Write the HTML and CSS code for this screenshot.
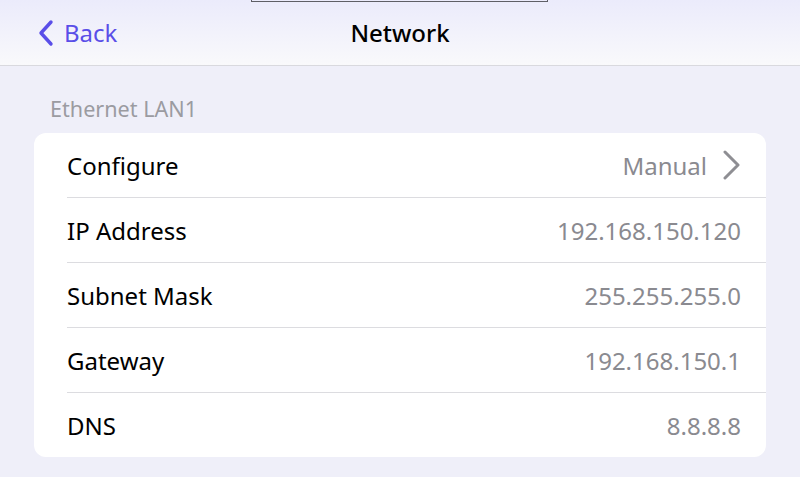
FILE: index.html
```html
<!DOCTYPE html>
<html lang="en">
<head>
<meta charset="utf-8">
<title>Network</title>
<link rel="stylesheet" href="styles.css">
</head>
<body>
<div class="notch"></div>
<header class="navbar">
  <a class="back" href="#">
    <svg class="back-icon" width="18" height="28" viewBox="0 0 18 28" aria-hidden="true">
      <path d="M14 3 L4 14 L14 25" fill="none" stroke="currentColor" stroke-width="3.4" stroke-linecap="round" stroke-linejoin="round"/>
    </svg>
    <span>Back</span>
  </a>
  <h1 class="title">Network</h1>
  <div class="spacer"></div>
</header>
<main class="content">
  <div class="section-label">Ethernet LAN1</div>
  <div class="card">
    <div class="row">
      <span class="row-label">Configure</span>
      <span class="row-value">Manual
        <svg class="chevron" width="20" height="30" viewBox="0 0 20 30" aria-hidden="true">
          <path d="M3 2 L16 15 L3 28" fill="none" stroke="currentColor" stroke-width="3" stroke-linecap="round" stroke-linejoin="round"/>
        </svg>
      </span>
    </div>
    <div class="row">
      <span class="row-label">IP Address</span>
      <span class="row-value">192.168.150.120</span>
    </div>
    <div class="row">
      <span class="row-label">Subnet Mask</span>
      <span class="row-value">255.255.255.0</span>
    </div>
    <div class="row">
      <span class="row-label">Gateway</span>
      <span class="row-value">192.168.150.1</span>
    </div>
    <div class="row">
      <span class="row-label">DNS</span>
      <span class="row-value">8.8.8.8</span>
    </div>
  </div>
</main>
</body>
</html>
```
FILE: styles.css
```css
* { box-sizing: border-box; }
html, body { margin: 0; padding: 0; }
body {
  width: 800px;
  height: 477px;
  overflow: hidden;
  position: relative;
  background: #efeff9;
  font-family: "Noto Sans", "Open Sans", sans-serif;
  color: #000;
}
.notch {
  position: absolute;
  left: 251px;
  top: -10px;
  width: 297px;
  height: 12px;
  border: 1px solid #5f5f66;
  z-index: 2;
}
.navbar {
  height: 66px;
  display: grid;
  grid-template-columns: 1fr auto 1fr;
  align-items: center;
  background: linear-gradient(#ebebfb, #f9f9fb);
  border-bottom: 1px solid #d9d9de;
}
.back {
  display: flex;
  align-items: center;
  gap: 9px;
  padding-left: 37px;
  color: #5a4ee8;
  text-decoration: none;
  font-size: 24px;
  line-height: 1;
  padding-top: 1px;
}
.back-icon { display: block; }
.title {
  margin: 0;
  font-size: 24px;
  font-weight: 500;
  line-height: 1;
  padding-top: 1px;
}
.content {
  padding: 29px 34px 0;
}
.section-label {
  padding-left: 16px;
  font-size: 21.6px;
  line-height: 28px;
  color: #9b9ba1;
  margin-bottom: 10px;
}
.card {
  background: #fff;
  border-radius: 12px;
  padding-left: 33px;
}
.row {
  height: 65px;
  display: flex;
  align-items: center;
  justify-content: space-between;
  padding-right: 25px;
  border-bottom: 1px solid #dcdce0;
  font-size: 24px;
}
.row:last-child { border-bottom: none; height: 64px; }
.row-label { color: #000; }
.row-value {
  color: #8a8a90;
  display: flex;
  align-items: center;
  gap: 15px;
}
.chevron { display: block; color: #8e8e93; margin-right: -1px; }
```
